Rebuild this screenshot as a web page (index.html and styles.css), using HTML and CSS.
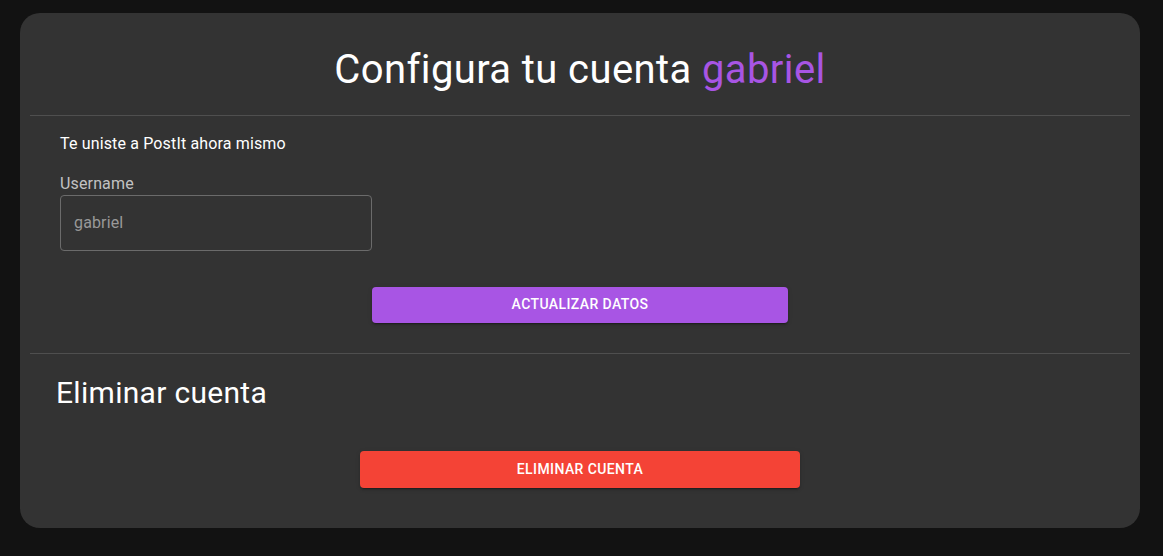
FILE: index.html
```html
<!DOCTYPE html>
<html lang="es">
<head>
<meta charset="utf-8">
<meta name="viewport" content="width=device-width, initial-scale=1">
<title>Configura tu cuenta</title>
<link rel="stylesheet" href="styles.css">
</head>
<body>
<main class="card">
  <h1 class="title">Configura tu cuenta <span class="name">gabriel</span></h1>
  <form class="profile">
    <p class="joined">Te uniste a PostIt ahora mismo</p>
    <div class="field">
      <label class="label" for="username">Username</label>
      <input class="input" id="username" type="text" placeholder="gabriel">
    </div>
    <button class="button update" type="button">Actualizar datos</button>
  </form>
  <section class="danger">
    <h2 class="subtitle">Eliminar cuenta</h2>
    <button class="button delete" type="button">Eliminar cuenta</button>
  </section>
</main>
</body>
</html>
```
FILE: styles.css
```css
* {
  box-sizing: border-box;
}

body {
  margin: 0;
  padding: 13px 23px 28px 20px;
  background: #121212;
  color: #fff;
  font-family: Roboto, sans-serif;
  font-size: 16px;
  line-height: 24px;
  letter-spacing: 0.15px;
}

.card {
  padding: 33px 10px 40px;
  border-radius: 20px;
  background: #333;
}

.title {
  margin: 0;
  padding-bottom: 21px;
  font-size: 40px;
  font-weight: 400;
  line-height: 48px;
  letter-spacing: 0.4px;
  text-align: center;
}

.name {
  color: #a855e4;
}

.profile,
.danger {
  display: flex;
  flex-direction: column;
  border-top: 1px solid #4f4f4f;
}

.profile {
  padding: 16px 30px 30px;
}

.joined {
  margin: 0 0 16px;
}

.field {
  display: flex;
  flex-direction: column;
  width: 30%;
}

.label {
  color: #c2c2c2;
  line-height: 23px;
}

.input {
  height: 56px;
  padding: 0 13px 2px;
  border: 1px solid #6b6b6b;
  border-radius: 4px;
  background: transparent;
  color: #fff;
  font: inherit;
  letter-spacing: inherit;
}

.input::placeholder {
  color: #999;
  opacity: 1;
}

.button {
  align-self: center;
  padding: 5px 16px 7px;
  border: 0;
  border-radius: 4px;
  color: #fff;
  font: 500 14px/24px Roboto, sans-serif;
  letter-spacing: 0.4px;
  text-transform: uppercase;
  box-shadow: 0 3px 1px -2px rgba(0, 0, 0, 0.2), 0 2px 2px rgba(0, 0, 0, 0.14), 0 1px 5px rgba(0, 0, 0, 0.12);
}

.update {
  width: 40%;
  margin-top: 36px;
  background: #a855e4;
}

.delete {
  width: 40%;
  margin-top: 40px;
  padding-top: 6px;
  background: #f44336;
}

.subtitle {
  margin: 0;
  padding: 21px 26px 0;
  font-size: 30px;
  font-weight: 400;
  line-height: 36px;
  letter-spacing: 0.3px;
}
```
